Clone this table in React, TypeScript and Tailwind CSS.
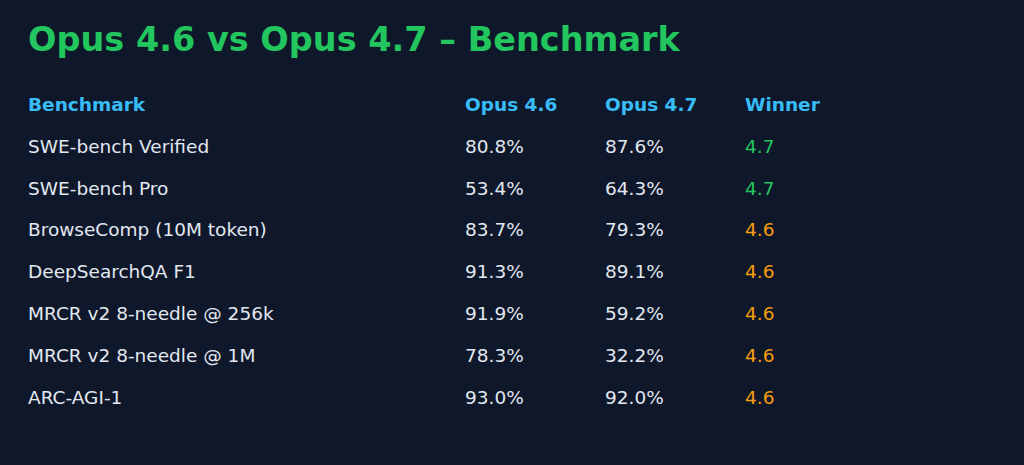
const ROWS = [
  { name: 'SWE-bench Verified', a: '80.8%', b: '87.6%', win: '4.7' },
  { name: 'SWE-bench Pro', a: '53.4%', b: '64.3%', win: '4.7' },
  { name: 'BrowseComp (10M token)', a: '83.7%', b: '79.3%', win: '4.6' },
  { name: 'DeepSearchQA F1', a: '91.3%', b: '89.1%', win: '4.6' },
  { name: 'MRCR v2 8-needle @ 256k', a: '91.9%', b: '59.2%', win: '4.6' },
  { name: 'MRCR v2 8-needle @ 1M', a: '78.3%', b: '32.2%', win: '4.6' },
  { name: 'ARC-AGI-1', a: '93.0%', b: '92.0%', win: '4.6' },
]

export default function App() {
  return (
    <div
      className="w-[1024px] h-[465px] bg-[#0f172a] px-[28px] pt-[20px]"
      style={{ fontFamily: '"DejaVu Sans", sans-serif' }}
    >
      <h1 className="text-[33.5px] leading-[40px] font-bold text-[#22c55e] mb-[24px]">
        Opus 4.6 vs Opus 4.7 – Benchmark
      </h1>
      <table className="border-collapse text-[18.5px] leading-[24px]">
        <thead>
          <tr className="h-[42px] text-[#38bdf8] font-bold text-left">
            <th className="w-[437px] p-0">Benchmark</th>
            <th className="w-[140px] p-0">Opus 4.6</th>
            <th className="w-[140px] p-0">Opus 4.7</th>
            <th className="w-[140px] p-0">Winner</th>
          </tr>
        </thead>
        <tbody>
          {ROWS.map(r => (
            <tr key={r.name} className="h-[41.8px] text-[#e2e8f0]">
              <td className="p-0">{r.name}</td>
              <td className="p-0">{r.a}</td>
              <td className="p-0">{r.b}</td>
              <td className={`p-0 ${r.win === '4.7' ? 'text-[#22c55e]' : 'text-[#f59e0b]'}`}>{r.win}</td>
            </tr>
          ))}
        </tbody>
      </table>
    </div>
  )
}
